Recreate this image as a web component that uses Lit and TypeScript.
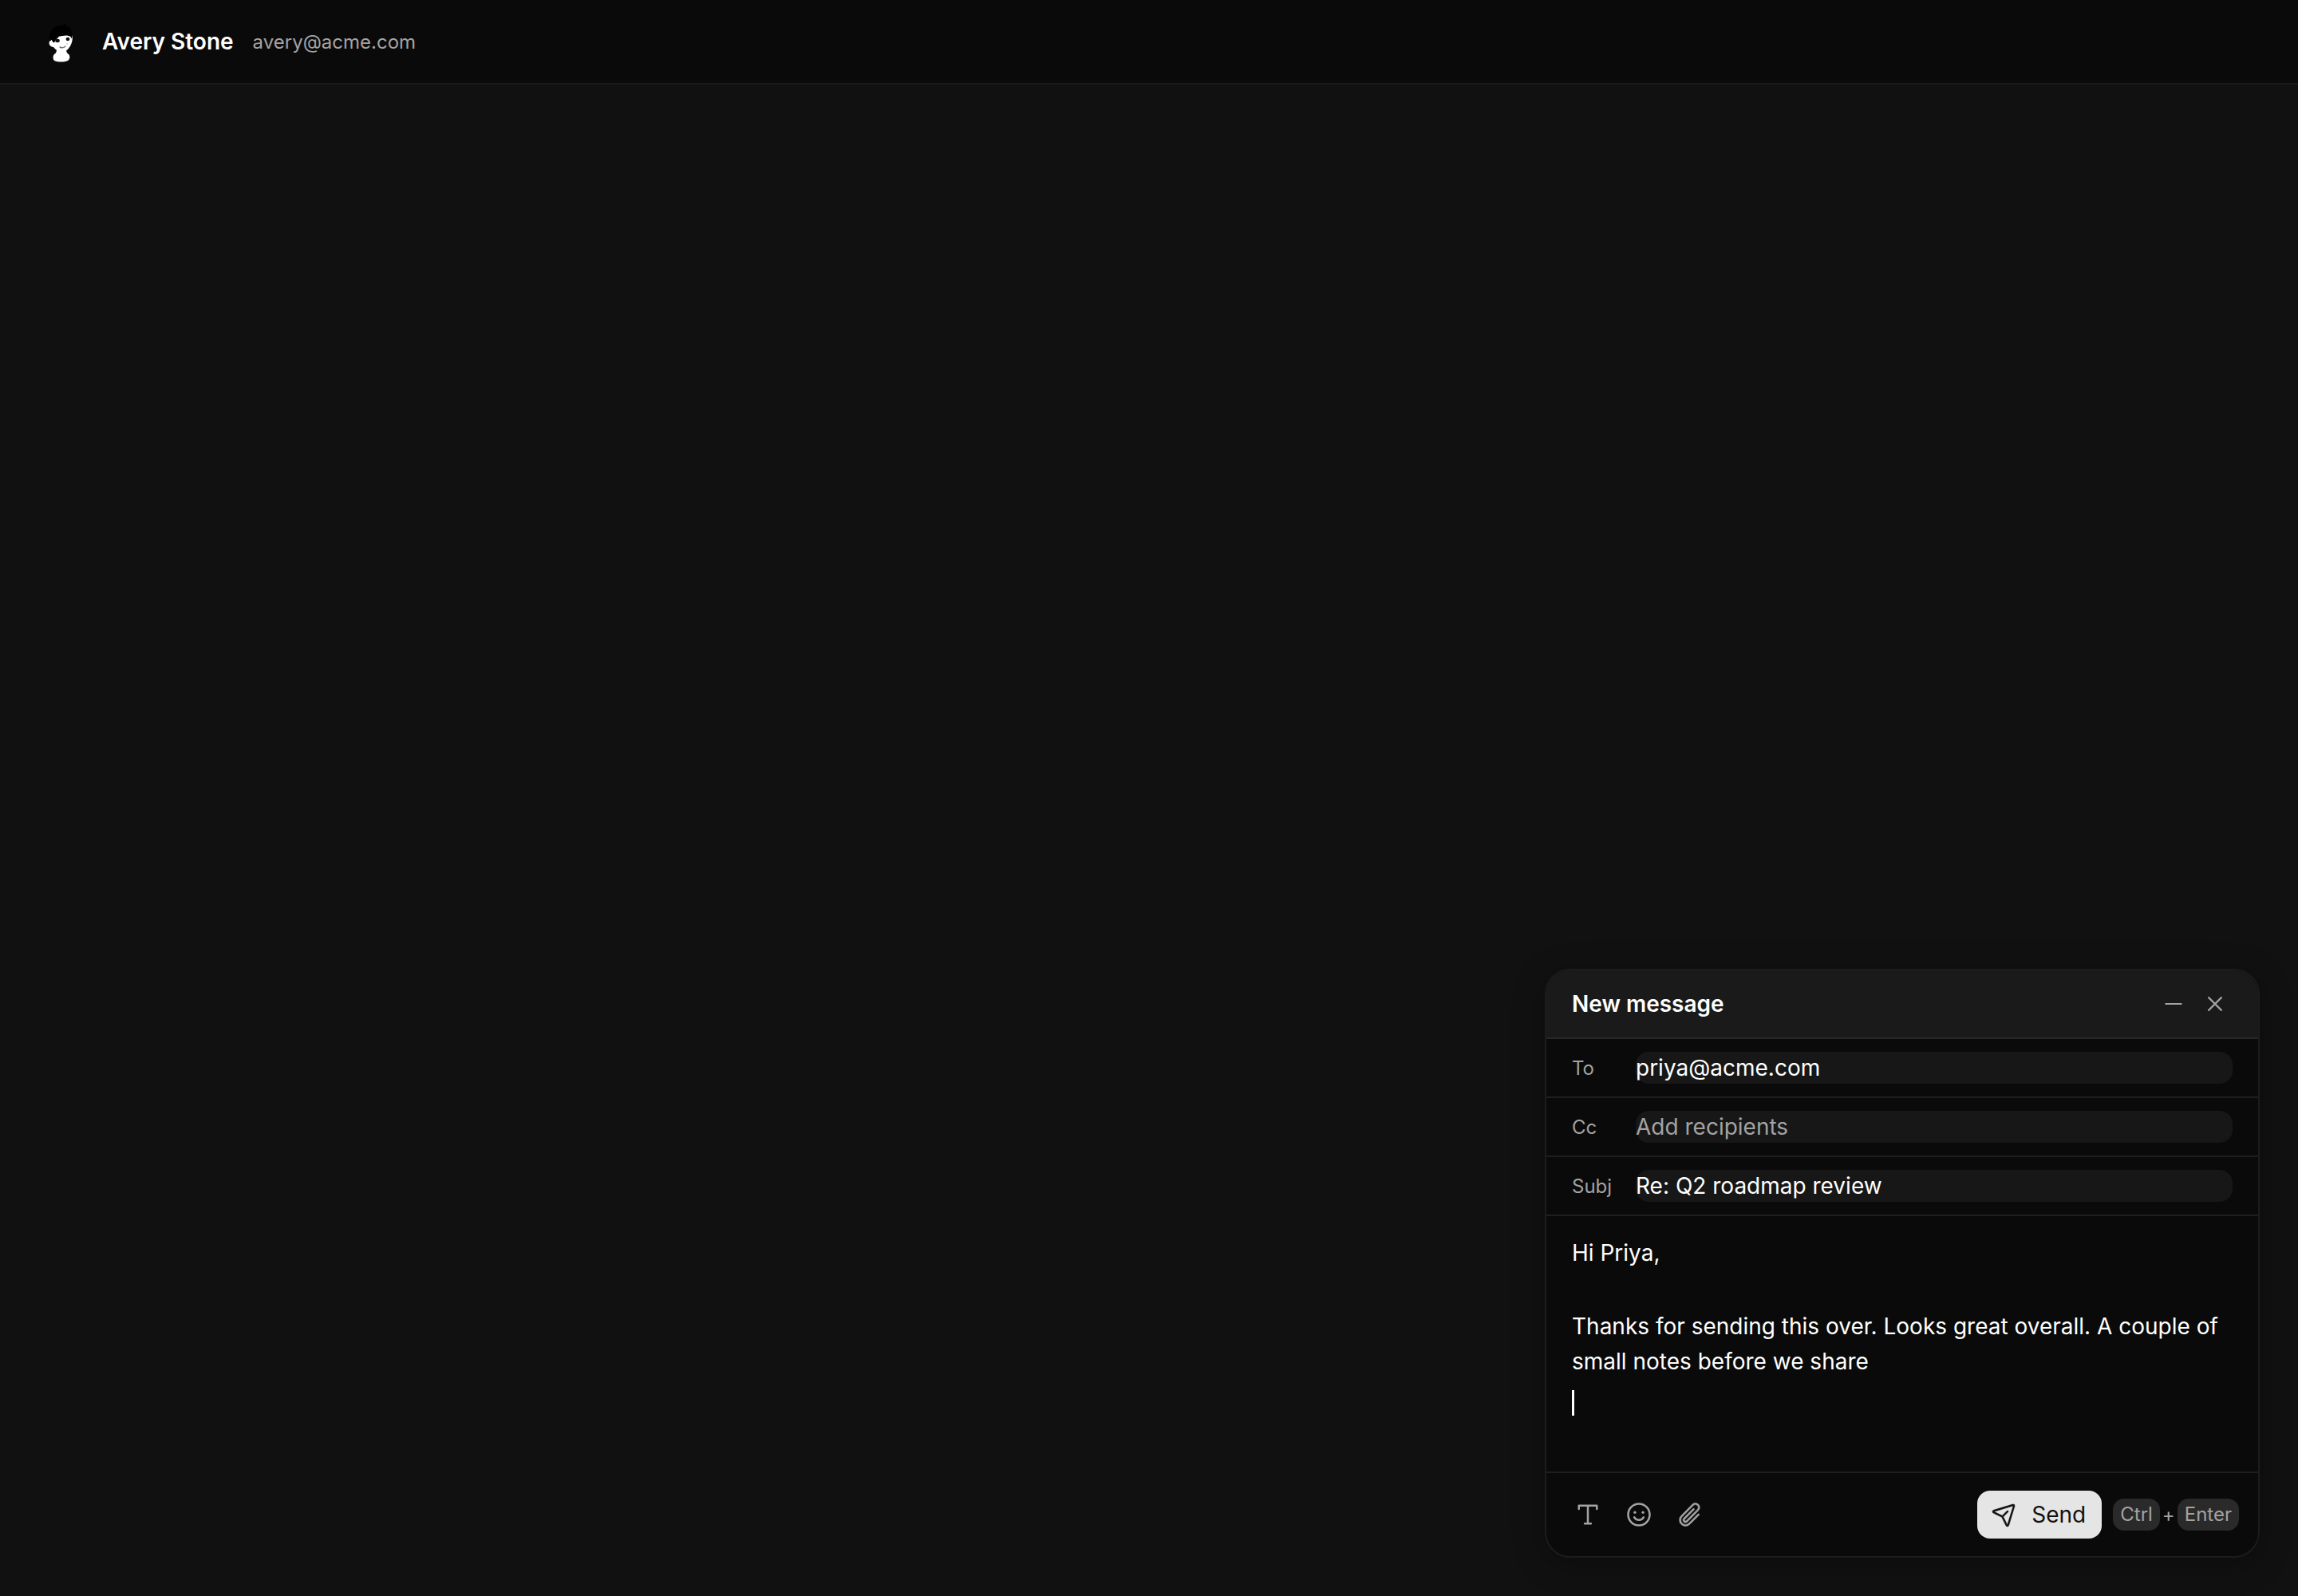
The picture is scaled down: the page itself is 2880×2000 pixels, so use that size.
import { LitElement, html, css, svg } from 'lit';
import { customElement } from 'lit/decorators.js';

const icon = (size: number, body: unknown, weight = 16) => html`
  <svg width=${size} height=${size} viewBox="0 0 256 256" fill="none" stroke="currentColor"
    stroke-width=${weight} stroke-linecap="round" stroke-linejoin="round">${body}</svg>
`;

const minus = svg`<path d="M40 128H216" />`;
const close = svg`<path d="M200 56L56 200M200 200L56 56" />`;
const textT = svg`<path d="M48 78V48H208V78M128 48V208M100 208H156" />`;
const smiley = svg`
  <circle cx="128" cy="128" r="96" />
  <circle cx="92" cy="108" r="12" fill="currentColor" stroke="none" />
  <circle cx="164" cy="108" r="12" fill="currentColor" stroke="none" />
  <path d="M169.6 152a48 48 0 0 1-83.2 0" />
`;
const paperclip = svg`<path fill="currentColor" stroke="currentColor" stroke-width="3" d="M209.66,122.34a8,8,0,0,1,0,11.32l-82.05,82a56,56,0,0,1-79.2-79.21L147.67,35.73a40,40,0,1,1,56.61,56.55L105,193A24,24,0,1,1,71,159L154.3,74.38A8,8,0,1,1,165.7,85.6L82.39,170.31a8,8,0,1,0,11.27,11.36L192.93,81A24,24,0,1,0,159,47L59.76,147.68a40,40,0,1,0,56.53,56.62l82.06-82A8,8,0,0,1,209.66,122.34Z" />`;
const plane = svg`<path fill="currentColor" stroke="currentColor" stroke-width="5" d="M227.32,28.68a16,16,0,0,0-15.66-4.08l-.15,0L19.57,82.84a16,16,0,0,0-2.49,29.8L102,154l41.3,84.87A15.86,15.86,0,0,0,157.74,248q.69,0,1.38-.06a15.88,15.88,0,0,0,14-11.51l58.2-191.94c0-.05,0-.1,0-.15A16,16,0,0,0,227.32,28.68ZM157.83,231.85l-.05.14,0-.07-40.06-82.3,48-48a8,8,0,0,0-11.31-11.31l-48,48L24.08,98.25l-.07,0,.14,0L216,40Z" />`;

// little cartoon head, drawn in page coordinates so it lines up with the reference crop
const avatar = html`
  <svg class="avatar" width="56" height="56" viewBox="48 24 56 56">
    <path fill="#fff" d="M71 62h12c0 3 1 5 3 6 2 2 2 6-1 8-5 2-12 2-17 0-2-2-2-6 0-8 2-1 3-3 3-6z" />
    <path fill="#fff" d="M65 46c-1 2-1 4-1 5-2 0-3 2-2 5 1 2 3 3 5 3 2 3 7 6 11 6 5 0 10-5 12-12 1-3 1-6 0-9z" />
    <path fill="#000" d="M62 46c0-7 6-13 13-14 3 0 5-1 7-2.5 1 1 1 2 1 3 4 1 7 5 7 9 0 2 0 5 0 7l-2-3c-2 0-4-1-5-3-3 2-6 3-9 3-1 2-3 3-4 4l-2 4c-1 0-2-1-3-3-2-1-3-3-3-5z" />
    <ellipse cx="72" cy="51" rx="2.8" ry="2.2" fill="#111" />
    <ellipse cx="85" cy="49" rx="2.4" ry="2.2" fill="#111" />
    <path d="M75 59c2 1 5 1 7-1" stroke="#777" stroke-width="1.4" fill="none" stroke-linecap="round" />
    <circle cx="84" cy="55" r="0.8" fill="#d9a066" />
  </svg>
`;

@customElement('app-root')
export class AppRoot extends LitElement {
  static styles = css`
    :host {
      display: block;
      position: relative;
      min-height: 100vh;
      background: #111111;
      font-family: Inter, 'Liberation Sans', sans-serif;
      color: #fff;
    }
    .topbar {
      display: flex;
      align-items: center;
      height: 104px;
      padding-left: 48px;
      background: #0a0a0a;
      border-bottom: 2px solid #1a1a1a;
    }
    .avatar {
      margin-right: 24px;
    }
    .name {
      font-size: 28px;
      font-weight: 600;
      margin-right: 24px;
    }
    .email {
      font-size: 24px;
      color: #a3a3a3;
    }
    .compose {
      position: absolute;
      right: 48px;
      bottom: 48px;
      width: 896px;
      box-sizing: border-box;
      display: flex;
      flex-direction: column;
      background: #0a0a0a;
      border: 2px solid #1c1c1c;
      border-radius: 32px;
      overflow: hidden;
      box-shadow: 0 8px 40px rgba(0, 0, 0, 0.3);
    }
    .head {
      display: flex;
      align-items: center;
      justify-content: space-between;
      height: 84px;
      padding: 0 40px 0 32px;
      background: #1a1a1a;
      border-bottom: 2px solid #262626;
    }
    .title {
      font-size: 28px;
      font-weight: 600;
    }
    .head-actions {
      display: flex;
      gap: 24px;
      color: #a3a3a3;
    }
    .head-actions svg {
      display: block;
    }
    .row {
      display: flex;
      align-items: center;
      height: 72px;
      padding: 0 32px;
      border-bottom: 2px solid #1f1f1f;
    }
    .label {
      width: 80px;
      flex: none;
      font-size: 24px;
      color: #a3a3a3;
    }
    .input {
      flex: 1;
      height: 40px;
      line-height: 40px;
      border-radius: 16px;
      background: #171717;
      font-size: 28px;
      color: #fff;
    }
    .input.empty {
      color: #a3a3a3;
    }
    .body {
      height: 322px;
      box-sizing: border-box;
      padding: 24px 32px 0;
      font-size: 28px;
      line-height: 44px;
      border-bottom: 2px solid #1f1f1f;
    }
    .body p {
      margin: 0 0 48px;
    }
    .caret {
      width: 3px;
      height: 32px;
      margin-top: 14px;
      background: #fff;
    }
    .foot {
      display: flex;
      align-items: center;
      justify-content: space-between;
      height: 104px;
      box-sizing: border-box;
      padding: 0 24px 0 32px;
    }
    .tools {
      display: flex;
      gap: 24px;
      color: #a3a3a3;
    }
    .tool {
      display: flex;
      align-items: center;
      justify-content: center;
      width: 40px;
      height: 40px;
    }
    .actions {
      display: flex;
      align-items: center;
      gap: 14px;
    }
    .send {
      display: flex;
      align-items: center;
      gap: 18px;
      width: 156px;
      height: 60px;
      box-sizing: border-box;
      padding-left: 18px;
      border-radius: 16px;
      background: #e5e5e5;
      color: #111;
      font-size: 28px;
      font-weight: 400;
    }
    .send svg {
      flex: none;
    }
    .keys {
      display: flex;
      align-items: center;
      gap: 3px;
      font-size: 24px;
      color: #a3a3a3;
    }
    .key {
      height: 40px;
      line-height: 40px;
      padding: 0 9px;
      border-radius: 14px;
      background: #2a2a2a;
    }
  `;

  render() {
    return html`
      <div class="topbar">
        ${avatar}
        <span class="name">Avery Stone</span>
        <span class="email">avery@acme.com</span>
      </div>
      <div class="compose">
        <div class="head">
          <span class="title">New message</span>
          <div class="head-actions">${icon(28, minus, 20)}${icon(28, close, 20)}</div>
        </div>
        <div class="row">
          <span class="label">To</span>
          <div class="input">priya@acme.com</div>
        </div>
        <div class="row">
          <span class="label">Cc</span>
          <div class="input empty">Add recipients</div>
        </div>
        <div class="row">
          <span class="label">Subj</span>
          <div class="input">Re: Q2 roadmap review</div>
        </div>
        <div class="body">
          <p>Hi Priya,</p>
          <div>Thanks for sending this over. Looks great overall. A couple of small notes before we share</div>
          <div class="caret"></div>
        </div>
        <div class="foot">
          <div class="tools">
            <span class="tool">${icon(36, textT, 18)}</span>
            <span class="tool">${icon(36, smiley, 18)}</span>
            <span class="tool">${icon(36, paperclip)}</span>
          </div>
          <div class="actions">
            <div class="send">${icon(32, plane)}<span>Send</span></div>
            <div class="keys">
              <span class="key">Ctrl</span>
              <span>+</span>
              <span class="key">Enter</span>
            </div>
          </div>
        </div>
      </div>
    `;
  }
}
